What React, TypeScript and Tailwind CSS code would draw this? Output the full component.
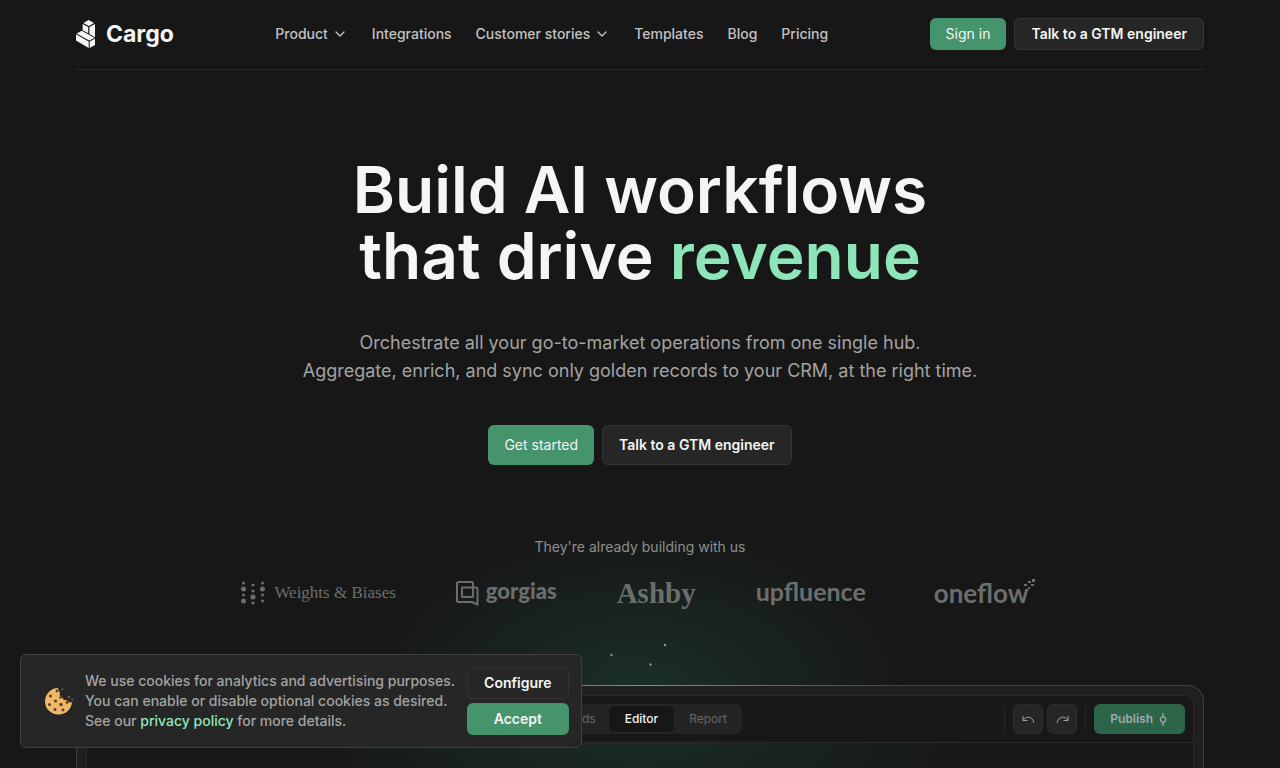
import React from 'react';
import { ChevronDown } from 'lucide-react';

const NAV_ITEMS = [
    { label: 'Product', menu: true },
    { label: 'Integrations', menu: false },
    { label: 'Customer stories', menu: true },
    { label: 'Templates', menu: false },
    { label: 'Blog', menu: false },
    { label: 'Pricing', menu: false },
];

const CargoMark = () => (
    <svg viewBox="0 0 19 28" className="w-[19px] h-7" fill="#f5f5f5" aria-hidden="true">
        <path d="M12.600 0 18 2.900 12.800 5.900 7.400 3Z" />
        <path d="M6.600 4 12.200 7.100V13.300L6.600 10.300Z" />
        <path d="M13.400 7 19 3.900V17.200L13.400 14Z" />
        <path d="M5.800 10.700 18.600 17.900 13.200 20.600 .6 13.400Z" />
        <path d="M0 14.200 12.700 21.500V28L0 20.600Z" />
        <path d="M13.700 21.500 19 18.800V25.100L13.700 28Z" />
    </svg>
);

const CookieIcon = () => (
    <svg viewBox="0 0 28 28" className="w-7 h-7 shrink-0" aria-hidden="true">
        <path d="M13 1C6 1 0 7 0 14.500S6 27.500 13.500 27.500 26.500 22 27 15c-2 1-4.500 0-5-2-2.500 1-4.500-.5-4.500-2.500-2.500-.5-3.500-2.500-2.500-4.500-1-1.500-1.500-3-2-5Z" fill="#efb96a" />
        <g fill="#5d3f1f">
            <circle cx="5.500" cy="9" r="1.500" />
            <circle cx="12" cy="4" r="1.400" />
            <circle cx="10.500" cy="14" r="1.600" />
            <circle cx="4.500" cy="17.500" r="1.500" />
            <circle cx="16" cy="17.500" r="1.700" />
            <circle cx="10" cy="22.500" r="1.500" />
            <circle cx="18" cy="23" r="1.400" />
            <circle cx="22" cy="15.500" r="1.400" />
            <circle cx="15.500" cy="10.500" r="1.300" />
        </g>
        <g fill="#a57a45">
            <circle cx="17" cy="2.500" r=".8" />
            <circle cx="19" cy="1.500" r=".5" />
            <circle cx="24" cy="10" r=".9" />
            <circle cx="27.200" cy="12.500" r=".8" />
        </g>
    </svg>
);

const UndoIcon = () => (
    <svg viewBox="0 0 13 9" className="w-[13px] h-[9px]" fill="none" stroke="currentColor" aria-hidden="true">
        <path d="M1 1v4.500h4.500M1 5.500C4 .5 10.500 1 12 8" />
    </svg>
);

const RedoIcon = () => (
    <svg viewBox="0 0 13 9" className="w-[13px] h-[9px]" fill="none" stroke="currentColor" aria-hidden="true">
        <path d="M12 1v4.500H7.500M12 5.500C9 .5 2.500 1 1 8" />
    </svg>
);

const CommitIcon = () => (
    <svg viewBox="0 0 12 13" className="w-3 h-[13px]" fill="none" stroke="currentColor" strokeWidth="1.300" aria-hidden="true">
        <circle cx="6" cy="6.500" r="2.600" />
        <path d="M6 0v3.900M6 9.100V13" />
    </svg>
);

const Logos = () => (
    <div className="mt-5 flex h-8 items-center justify-center gap-[60px] pr-1 text-[#6b6e6c]">
        <div className="flex items-center gap-2">
            <svg viewBox="0 0 25 24" className="w-[25px] h-6" fill="currentColor" aria-hidden="true">
                <circle cx="2.500" cy="2" r="1.500" />
                <circle cx="2.500" cy="8" r="2.500" />
                <circle cx="2.500" cy="14" r="1.500" />
                <circle cx="2.500" cy="20" r="2.500" />
                <circle cx="12" cy="4" r="1.600" />
                <circle cx="12" cy="10" r="1.600" />
                <circle cx="12" cy="16" r="2.600" />
                <circle cx="12" cy="22" r="1.600" />
                <circle cx="21.500" cy="2" r="1.500" />
                <circle cx="21.500" cy="8" r="2.500" />
                <circle cx="21.500" cy="14" r="1.500" />
                <circle cx="21.500" cy="20" r="1.500" />
            </svg>
            <span className="font-['Liberation_Serif',serif] text-[17px] leading-6">Weights &amp; Biases</span>
        </div>
        <div className="flex items-center gap-[7px]">
            <svg viewBox="0 0 23 25" className="w-[23px] h-[25px]" fill="none" stroke="currentColor" strokeWidth="2" strokeLinejoin="round" aria-hidden="true">
                <path d="M17 6V2.500a1.500 1.500 0 0 0-1.500-1.500h-13A1.500 1.500 0 0 0 1 2.500v17A1.500 1.500 0 0 0 2.500 21H16l5.500 2.500V8A1.500 1.500 0 0 0 20 6.500H6v9.500h11V6" />
            </svg>
            <span className="pb-1 font-[Lato,sans-serif] text-[22px] font-black leading-7">gorgias</span>
        </div>
        <span className="font-['Liberation_Serif',serif] text-[29px] font-bold leading-8">Ashby</span>
        <span className="pb-1 font-[Lato,sans-serif] text-[25px] font-bold leading-7">upfluence</span>
        <div className="relative ml-2 pr-1.5">
            <span className="font-[Lato,sans-serif] text-[26px] font-bold leading-8">oneflow</span>
            <svg viewBox="0 0 11 11" className="absolute right-0 top-0.5 size-[11px]" fill="currentColor" aria-hidden="true">
                <path d="M8 0h3v3H8zM4 2h3v2H4zM0 5h3v2H0zM7 5h3v2H7zM4 8h2v2H4z" />
            </svg>
        </div>
    </div>
);

const Header = () => (
    <header className="flex h-[70px] items-center justify-between border-b border-[#292929] pb-0.5">
        <a href="#home" className="flex items-center gap-[11px]">
            <CargoMark />
            <span className="text-[23px] font-bold leading-8 text-[#f5f5f5]">Cargo</span>
        </a>
        <nav className="flex items-center gap-6 text-sm font-medium text-[#c2c2c2]">
            {NAV_ITEMS.map((item) =>
                item.menu ? (
                    <button key={item.label} type="button" className="flex items-center gap-1">
                        {item.label}
                        <ChevronDown className="size-4" />
                    </button>
                ) : (
                    <a key={item.label} href="#page">{item.label}</a>
                )
            )}
        </nav>
        <div className="flex gap-2">
            <button type="button" className="h-8 rounded-md bg-[#45946c] px-4 text-sm text-[#f5f5f5]">Sign in</button>
            <button type="button" className="h-8 rounded-md border border-[#363636] bg-[#262626] px-4 text-sm font-semibold text-[#f5f5f5]">Talk to a GTM engineer</button>
        </div>
    </header>
);

const EditorWindow = () => (
    <div className="relative mt-[76px] flex grow flex-col rounded-t-2xl border border-b-0 border-[#3d3f3e] bg-[#202020] px-[9px] pt-[9px]">
        {/* highlight on the top edge and the sparks above it */}
        <div className="absolute -top-px left-1/4 right-1/4 h-px bg-linear-to-r from-transparent via-[#6d9c87] to-transparent" />
        <svg viewBox="0 0 60 24" className="absolute -top-[43px] left-1/2 -ml-[31px] w-[60px] h-6" fill="#87978f" aria-hidden="true">
            <circle cx="2.500" cy="12" r="1.200" />
            <circle cx="56" cy="2" r="1.200" />
            <circle cx="41.500" cy="21.500" r="1.200" />
        </svg>
        <div className="grow rounded-t-lg border border-b-0 border-[#292b2a] bg-[#171717] bg-[radial-gradient(ellipse_340px_220px_at_50%_0px,#1a2f27,#171717)]">
            <div className="grid h-[47px] grid-cols-[1fr_auto_1fr] items-center rounded-t-lg border-b border-[#292b2a] bg-[#171817] px-2">
                <div />
                <div className="flex h-[30px] rounded-md bg-[#242424] p-px text-xs text-[#666]">
                    <button type="button" className="pr-3 pl-2.5">Records</button>
                    <button type="button" className="rounded-md border border-[#262626] bg-[#171717] px-4 font-medium text-[#f5f5f5]">Editor</button>
                    <button type="button" className="px-3.5">Report</button>
                </div>
                <div className="flex items-center justify-end">
                    <div className="h-[26px] w-px bg-[#292929]" />
                    <div className="mx-2 flex gap-1 text-[#a0a0a0]">
                        <button type="button" aria-label="Undo" className="flex size-[30px] items-center justify-center rounded-md border border-[#2d2d2d] bg-[#262626]"><UndoIcon /></button>
                        <button type="button" aria-label="Redo" className="flex size-[30px] items-center justify-center rounded-md border border-[#2d2d2d] bg-[#262626]"><RedoIcon /></button>
                    </div>
                    <div className="h-[26px] w-px bg-[#292929]" />
                    <button type="button" className="ml-2 flex h-[30px] items-center gap-1 rounded-md bg-[#2d654b] px-4 text-xs font-semibold text-[#a1aaa5]">
                        Publish
                        <CommitIcon />
                    </button>
                </div>
            </div>
        </div>
    </div>
);

const CookieBanner = () => (
    <aside className="fixed bottom-5 left-5 flex items-center gap-3 rounded-md border border-[#404040] bg-[#262626] py-3 pr-3 pl-6">
        <CookieIcon />
        <p className="text-sm font-medium leading-5 text-[#a3a3a3]">
            We use cookies for analytics and advertising purposes.<br />
            You can enable or disable optional cookies as desired.<br />
            See our <a href="#privacy" className="text-[#8de5b9]">privacy policy</a> for more details.
        </p>
        <div className="flex flex-col gap-1 text-sm font-semibold text-[#f5f5f5]">
            <button type="button" className="h-8 rounded-md border border-[#333] px-4">Configure</button>
            <button type="button" className="h-8 rounded-md bg-[#45946c] px-4">Accept</button>
        </div>
    </aside>
);

const App: React.FC = () => {
    return (
        <div className="h-screen overflow-hidden bg-[#171717] bg-[radial-gradient(ellipse_280px_165px_at_50%_690px,#1a2f27,#171717)] font-[Inter,sans-serif]">
            <div className="mx-auto flex h-full max-w-[1280px] flex-col px-[76px]">
                <Header />
                <main className="flex grow flex-col pt-[87px] text-center">
                    <h1 className="text-[64px] font-semibold leading-[66px] text-[#f5f5f5]">
                        Build AI workflows<br />that drive <span className="text-[#8de5b9]">revenue</span>
                    </h1>
                    <p className="mt-10 text-lg leading-7 text-[#a3a3a3]">
                        Orchestrate all your go-to-market operations from one single hub.<br />
                        Aggregate, enrich, and sync only golden records to your CRM, at the right time.
                    </p>
                    <div className="mt-10 flex justify-center gap-2">
                        <button type="button" className="h-10 rounded-md bg-[#45946c] px-4 text-sm text-[#f5f5f5]">Get started</button>
                        <button type="button" className="h-10 rounded-md border border-[#363636] bg-[#262626] px-4 text-sm font-semibold text-[#f5f5f5]">Talk to a GTM engineer</button>
                    </div>
                    <p className="mt-[72px] text-sm leading-5 text-[#8f8f8f]">They're already building with us</p>
                    <Logos />
                    <EditorWindow />
                </main>
            </div>
            <CookieBanner />
        </div>
    );
};

export default App;
